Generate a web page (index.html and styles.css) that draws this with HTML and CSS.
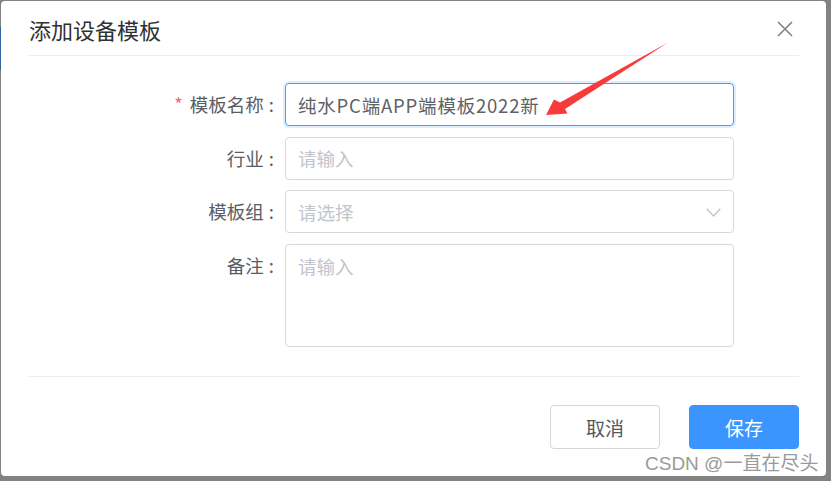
FILE: index.html
```html
<!DOCTYPE html>
<html lang="zh-CN">
<head>
<meta charset="utf-8">
<title>添加设备模板</title>
<link rel="stylesheet" href="styles.css">
</head>
<body>
<div class="overlay">
  <div class="dialog">
    <div class="dialog-header">
      <span class="title">添加设备模板</span>
      <span class="close">
        <svg width="16" height="16" viewBox="0 0 16 16"><path d="M1 1L15 15M15 1L1 15" stroke="#858585" stroke-width="1.7" fill="none"/></svg>
      </span>
    </div>
    <div class="form">
      <div class="row">
        <div class="label"><span class="star">*</span>模板名称<span class="colon">:</span></div>
        <div class="input focused"><span class="value">纯水PC端APP端模板2022新</span></div>
      </div>
      <div class="row">
        <div class="label">行业<span class="colon">:</span></div>
        <div class="input"><span class="placeholder">请输入</span></div>
      </div>
      <div class="row">
        <div class="label">模板组<span class="colon">:</span></div>
        <div class="input select">
          <span class="placeholder">请选择</span>
          <svg class="chevron" width="15" height="9" viewBox="0 0 15 9"><path d="M0.7 0.7L7.5 8L14.3 0.7" stroke="#c0c4cc" stroke-width="1.3" fill="none"/></svg>
        </div>
      </div>
      <div class="row row-top">
        <div class="label">备注<span class="colon">:</span></div>
        <div class="input textarea"><span class="placeholder">请输入</span></div>
      </div>
    </div>
    <div class="divider"></div>
    <div class="footer">
      <button class="btn">取消</button>
      <button class="btn btn-primary">保存</button>
    </div>
  </div>
</div>
<div class="watermark">CSDN @一直在尽头</div>
<svg class="arrow" width="831" height="481" viewBox="0 0 831 481">
  <polygon points="546,115 554,99.5 560,102.5 668,42.5 565,109 567.5,113.5" fill="#f73b3b"/>
</svg>
</body>
</html>
```

FILE: styles.css
```css
* { box-sizing: border-box; }

html, body {
  margin: 0;
  padding: 0;
}

body {
  width: 831px;
  height: 481px;
  overflow: hidden;
  position: relative;
  background-color: #828282;
  background-image: linear-gradient(to bottom, transparent 27px, #2f64a0 27px, #2f64a0 70px, transparent 70px);
  background-size: 1px 100%;
  background-repeat: no-repeat;
  font-family: "Noto Sans CJK SC", "Noto Sans", sans-serif;
}

.overlay {
  width: 831px;
  height: 481px;
  padding: 1px 5px 5px 1px;
  display: flex;
}

.dialog {
  flex: 1;
  background: #fff;
  border-radius: 4px;
  padding: 0 27px;
  display: flex;
  flex-direction: column;
}

.dialog-header {
  height: 55px;
  border-bottom: 1px solid #ebedf0;
  display: flex;
  align-items: center;
  justify-content: space-between;
  padding: 1px 6px 0 1px;
}

.title {
  font-size: 22px;
  color: #303133;
  line-height: 1;
}

.close {
  display: flex;
  width: 16px;
  height: 16px;
}

.form {
  padding-top: 27px;
  display: flex;
  flex-direction: column;
  gap: 10.7px;
}

.row {
  display: flex;
  align-items: center;
}

.row-top {
  align-items: flex-start;
}

.label {
  width: 257px;
  padding-right: 11px;
  text-align: right;
  font-size: 18.5px;
  line-height: 43px;
  color: #5a5d63;
}

.colon {
  margin-left: 5px;
}

.star {
  color: #f56c6c;
  margin-right: 7px;
}

.input {
  width: 449px;
  height: 43px;
  border: 1px solid #d7d9de;
  border-radius: 4px;
  padding: 0 12px;
  display: flex;
  align-items: center;
  font-size: 18.5px;
  color: #606266;
}

.input.focused {
  border-color: #409eff;
  box-shadow: 0 0 0 2px rgba(64, 158, 255, 0.18);
}

.value {
  letter-spacing: 0.8px;
}

.placeholder {
  color: #c0c4cc;
}

.select {
  justify-content: space-between;
  padding-right: 12px;
}

.chevron {
  margin-top: 1px;
}

.textarea {
  height: 103px;
  align-items: flex-start;
  padding: 8px 12px;
  line-height: 1.5;
}

.divider {
  margin-top: 29px;
  height: 1px;
  background: #ebedf0;
}

.footer {
  padding-top: 28px;
  display: flex;
  justify-content: flex-end;
  gap: 29px;
}

.btn {
  width: 110px;
  height: 44px;
  border: 1px solid #d4d6dc;
  border-radius: 4px;
  background: #fff;
  color: #55585e;
  font-family: "Noto Sans CJK SC", "Noto Sans", sans-serif;
  font-size: 19px;
  padding: 0;
}

.btn-primary {
  background: #3a96fe;
  border-color: #3a96fe;
  color: #fff;
}

.watermark {
  position: absolute;
  left: 645px;
  top: 448px;
  font-family: "Liberation Sans", "Noto Sans CJK SC", sans-serif;
  font-size: 19px;
  color: #9a9a9a;
  white-space: nowrap;
}

.arrow {
  position: absolute;
  left: 0;
  top: 0;
  pointer-events: none;
}
```
